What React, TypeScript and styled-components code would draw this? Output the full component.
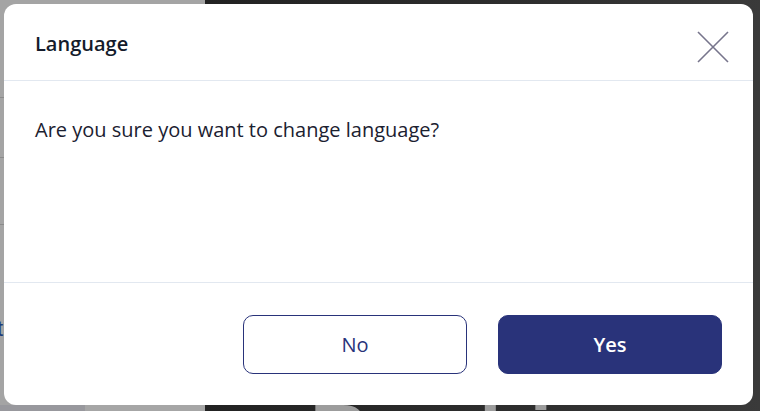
import styled, { createGlobalStyle } from 'styled-components';

const GlobalStyle = createGlobalStyle`
  html, body {
    margin: 0;
    padding: 0;
    width: 760px;
    height: 411px;
    overflow: hidden;
  }
  #root {
    width: 760px;
    height: 411px;
  }
  * {
    box-sizing: border-box;
  }
`;

const Page = styled.div`
  position: relative;
  display: flex;
  width: 760px;
  height: 411px;
  overflow: hidden;
  font-family: 'Open Sans', 'Noto Sans', sans-serif;
`;

const Sidebar = styled.div`
  width: 205px;
  flex-shrink: 0;
  display: flex;
  flex-direction: column;
  background-color: #a4a4a4;
  overflow: hidden;
`;

const SidebarRow = styled.div<{ $h: number }>`
  height: ${({ $h }) => $h}px;
  flex-shrink: 0;
  border-bottom: 1px solid #8b8b8b;
`;

const SidebarLink = styled.div`
  flex: 1;
  padding: 92px 0 0 0;
  margin-left: -3px;
  font-family: 'Liberation Sans', Arial, sans-serif;
  font-size: 22px;
  line-height: 24px;
  color: #1c3b7a;
`;

const SidebarFooter = styled.div`
  display: flex;
  height: 6px;
  flex-shrink: 0;
`;

const FooterPart = styled.div<{ $w?: number; $bg: string }>`
  width: ${({ $w }) => ($w ? `${$w}px` : 'auto')};
  flex: ${({ $w }) => ($w ? '0 0 auto' : '1')};
  background-color: ${({ $bg }) => $bg};
`;

const Hero = styled.div`
  flex: 1;
  display: flex;
  flex-direction: column;
  justify-content: flex-end;
  background: linear-gradient(90deg, #222222 0%, #2e2e2e 60%, #3a3a3a 100%);
  overflow: hidden;
`;

const HeroTitle = styled.div`
  margin: 0 0 -62px 105px;
  font-family: 'Liberation Sans', Arial, sans-serif;
  font-size: 80px;
  line-height: 80px;
  font-weight: 700;
  letter-spacing: 6px;
  color: #9c9c9c;
`;

const Overlay = styled.div`
  position: absolute;
  inset: 0;
  padding: 4px 0 0 4px;
`;

const Modal = styled.div`
  width: 749px;
  height: 401px;
  background-color: #ffffff;
  border-radius: 12px;
  display: flex;
  flex-direction: column;
  overflow: hidden;
  font-family: 'Open Sans', 'Noto Sans', sans-serif;
`;

const Header = styled.div`
  height: 77px;
  flex-shrink: 0;
  display: flex;
  align-items: center;
  justify-content: space-between;
  padding: 2px 24px 0 31px;
  border-bottom: 1px solid #e2e8f0;
`;

const Title = styled.h2`
  margin: 0;
  font-size: 20px;
  font-weight: 600;
  color: #141b2b;
`;

const CloseButton = styled.button`
  width: 32px;
  height: 32px;
  padding: 0;
  margin-top: 8px;
  border: none;
  background: transparent;
  display: flex;
  align-items: center;
  justify-content: center;
  cursor: pointer;

  svg {
    width: 32px;
    height: 32px;
  }
`;

const Body = styled.div`
  flex: 1;
  padding: 36px 31px 0 31px;
  border-bottom: 1px solid #e2e8f0;
`;

const Message = styled.p`
  margin: 0;
  font-size: 20px;
  line-height: 26px;
  color: #1b2130;
`;

const Footer = styled.div`
  height: 122px;
  flex-shrink: 0;
  display: flex;
  align-items: center;
  justify-content: flex-end;
  gap: 31px;
  padding: 0 31px;
`;

const Button = styled.button<{ $primary?: boolean }>`
  width: 224px;
  height: 59px;
  border-radius: 10px;
  border: 1px solid #29337a;
  background-color: ${({ $primary }) => ($primary ? '#29337a' : '#ffffff')};
  color: ${({ $primary }) => ($primary ? '#ffffff' : '#29337a')};
  font-family: 'Open Sans', 'Noto Sans', sans-serif;
  font-size: 20px;
  font-weight: ${({ $primary }) => ($primary ? 600 : 400)};
  cursor: pointer;
`;

export default function App() {
  return (
    <>
      <GlobalStyle />
      <Page>
        <Sidebar>
          <SidebarRow $h={98} />
          <SidebarRow $h={60} />
          <SidebarRow $h={67} />
          <SidebarLink>t</SidebarLink>
          <SidebarFooter>
            <FooterPart $w={85} $bg="#98989d" />
            <FooterPart $bg="#a6a6a6" />
          </SidebarFooter>
        </Sidebar>
        <Hero>
          <HeroTitle>Ranking</HeroTitle>
        </Hero>
        <Overlay>
          <Modal>
            <Header>
              <Title>Language</Title>
              <CloseButton aria-label="Close">
                <svg viewBox="0 0 32 32" fill="none">
                  <path d="M1 1L31 31M31 1L1 31" stroke="#77758c" strokeWidth="1.6" />
                </svg>
              </CloseButton>
            </Header>
            <Body>
              <Message>Are you sure you want to change language?</Message>
            </Body>
            <Footer>
              <Button>No</Button>
              <Button $primary>Yes</Button>
            </Footer>
          </Modal>
        </Overlay>
      </Page>
    </>
  );
}
